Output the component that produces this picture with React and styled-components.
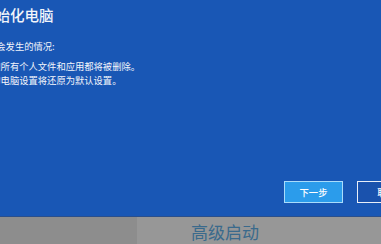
import React from "react";
import styled, { createGlobalStyle } from "styled-components";

const Global = createGlobalStyle`
  html, body { margin: 0; padding: 0; width: 381px; height: 244px; overflow: hidden; }
  body { font-family: "Noto Sans CJK SC", "Noto Sans", sans-serif; }
`;

const Screen = styled.div`
  width: 381px;
  height: 244px;
  display: flex;
  flex-direction: column;
  overflow: hidden;
`;

const Panel = styled.div`
  height: 217px;
  background: #1957b5;
  display: flex;
  flex-direction: column;
  padding: 6px 0 13px;
  box-sizing: border-box;
  overflow: hidden;
  color: #f2f5fb;
  border-bottom: 1px solid #2a4f8c;
`;

const Content = styled.div`
  margin-left: -18px;
  display: flex;
  flex-direction: column;
`;

const Title = styled.h1`
  margin: 0 0 0 -1px;
  font-size: 14.5px;
  line-height: 18px;
  font-weight: 500;
  white-space: nowrap;
`;

const Lead = styled.p`
  margin: 15px 0 0 5px;
  font-size: 9.3px;
  line-height: 14px;
  white-space: nowrap;
`;

const List = styled.ul`
  margin: 7px 0 0;
  padding: 0;
  list-style: none;
`;

const Item = styled.li`
  font-size: 9.3px;
  line-height: 13.5px;
  white-space: nowrap;
`;

const Bullet = styled.span`
  display: inline-block;
  width: 8px;
  margin-left: -8px;
`;

const ButtonRow = styled.div`
  margin-top: auto;
  margin-right: -35px;
  display: flex;
  justify-content: flex-end;
  gap: 14px;
`;

const Button = styled.button`
  width: 59px;
  height: 22px;
  box-sizing: border-box;
  border: 1.5px solid ${(p) => (p.$primary ? "#a9dcfb" : "#e8eef8")};
  background: ${(p) => (p.$primary ? "#2b9ceb" : "#1a52ad")};
  color: #ffffff;
  font-family: "Noto Sans CJK SC", sans-serif;
  font-size: 9.3px;
  font-weight: 500;
  padding: 0;
  display: flex;
  align-items: center;
  justify-content: center;
`;

const Footer = styled.div`
  flex: 1;
  display: grid;
  grid-template-columns: 137px 1fr;
`;

const FooterLeft = styled.div`
  background: #8d8d8d;
`;

const FooterTile = styled.div`
  background: #979797;
  padding: 3px 0 0 54px;
  color: #3a6a8c;
  font-size: 17px;
  line-height: 24px;
  white-space: nowrap;
`;

export default function App() {
  return (
    <>
      <Global />
      <Screen>
        <Panel>
          <Content>
            <Title>初始化电脑</Title>
            <Lead>将会发生的情况:</Lead>
            <List>
              <Item><Bullet>•</Bullet>你的所有个人文件和应用都将被删除。</Item>
              <Item><Bullet>•</Bullet>你的电脑设置将还原为默认设置。</Item>
            </List>
          </Content>
          <ButtonRow>
            <Button $primary>下一步</Button>
            <Button>取消</Button>
          </ButtonRow>
        </Panel>
        <Footer>
          <FooterLeft />
          <FooterTile>高级启动</FooterTile>
        </Footer>
      </Screen>
    </>
  );
}
